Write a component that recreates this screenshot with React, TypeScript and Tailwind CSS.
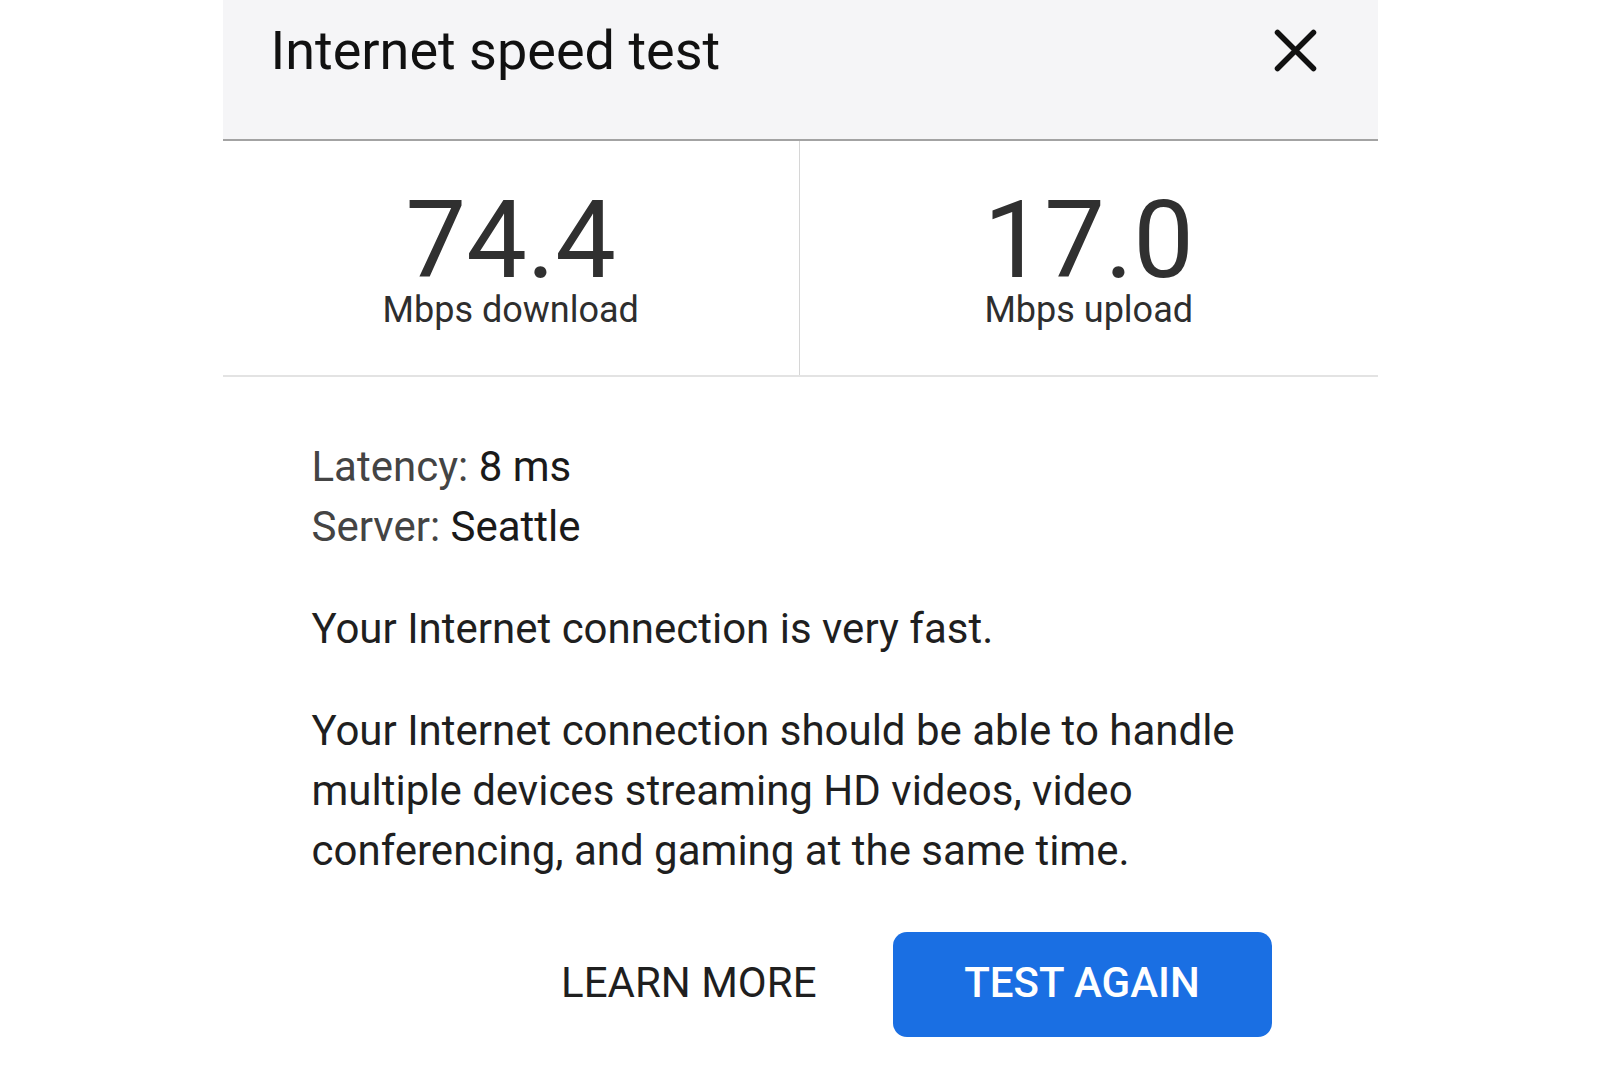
import React from "react";

export default function App() {
  return (
    <div className="w-full min-h-[1067px] bg-white" style={{ fontFamily: "Roboto, 'Noto Sans', sans-serif" }}>
      <div className="mx-auto w-[1155px]">
        <div className="h-[141px] bg-[#f5f5f7] border-b-2 border-[#a3a3a3] flex items-start justify-between pl-[48px] pr-[61px]">
          <div className="mt-[24px] text-[54px] leading-none text-[#111111]">Internet speed test</div>
          <svg className="mt-[29px]" width="43" height="43" viewBox="0 0 43 43">
            <path d="M3.5 3.5 L39.5 39.5 M39.5 3.5 L3.5 39.5" stroke="#111111" strokeWidth="5.5" strokeLinecap="round" />
          </svg>
        </div>
        <div className="grid grid-cols-2 h-[236px] border-b-2 border-[#e3e3e3]">
          <div className="flex flex-col items-center border-r border-[#d6d6d6] pt-[57px]">
            <div className="text-[108px] leading-[84px] text-[#303030]">74.4</div>
            <div className="text-[36px] leading-none mt-[10px] text-[#2e2e2e]">Mbps download</div>
          </div>
          <div className="flex flex-col items-center pt-[57px]">
            <div className="text-[108px] leading-[84px] text-[#303030]">17.0</div>
            <div className="text-[36px] leading-none mt-[10px] text-[#2e2e2e]">Mbps upload</div>
          </div>
        </div>
        <div className="pl-[89px] pt-[60px] text-[42px] leading-[60px] text-[#1f1f1f]">
          <div>
            <span className="text-[#444444]">Latency: </span>
            <span className="text-[#1a1a1a]">8 ms</span>
          </div>
          <div>
            <span className="text-[#444444]">Server: </span>
            <span className="text-[#1a1a1a]">Seattle</span>
          </div>
          <div className="mt-[42px]">Your Internet connection is very fast.</div>
          <div className="mt-[42px]">
            Your Internet connection should be able to handle
            <br />
            multiple devices streaming HD videos, video
            <br />
            conferencing, and gaming at the same time.
          </div>
        </div>
        <div className="flex items-center justify-end pr-[106px] mt-[51px] gap-[76px]">
          <button className="text-[42px] leading-none font-normal text-[#1f1f1f] mb-[4px]">LEARN MORE</button>
          <button className="w-[379px] h-[105px] rounded-[14px] bg-[#1a6fe3] text-white text-[42px] leading-none font-medium pb-[4px]">
            TEST AGAIN
          </button>
        </div>
      </div>
    </div>
  );
}
